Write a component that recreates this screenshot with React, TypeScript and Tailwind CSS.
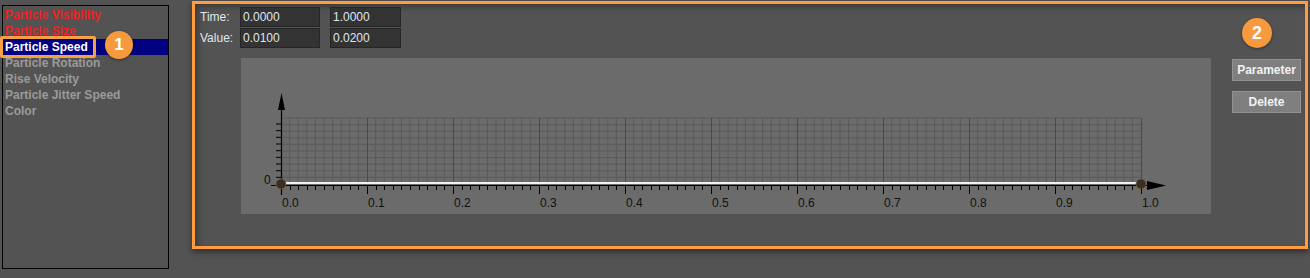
import React from 'react';

const items = [
  { label: 'Particle Visibility', tone: 'red' },
  { label: 'Particle Size', tone: 'red' },
  { label: 'Particle Speed', tone: 'selected' },
  { label: 'Particle Rotation', tone: 'gray' },
  { label: 'Rise Velocity', tone: 'gray' },
  { label: 'Particle Jitter Speed', tone: 'gray' },
  { label: 'Color', tone: 'gray' },
];

const X0 = 281;
const X1 = 1141;
const STEP = (X1 - X0) / 100;

function CurveChart() {
  const minor = Array.from({ length: 101 }, (_, i) => X0 + i * STEP);
  const rows = Array.from({ length: 10 }, (_, i) => 118 + i * 6.6);
  const yTicks = Array.from({ length: 9 }, (_, i) => 124 + i * 6.67);
  const labels = Array.from({ length: 11 }, (_, i) => i);

  return (
    <svg width={970} height={156} viewBox="241 58 970 156" className="block">
      {/* grid */}
      {minor.map((x, i) =>
        i % 10 === 0 ? null : (
          <line key={'v' + i} x1={x} y1={118} x2={x} y2={184} stroke="#5b5b5b" strokeWidth={1} />
        )
      )}
      {rows.map((y, i) => (
        <line key={'h' + i} x1={X0} y1={y} x2={X1} y2={y} stroke="#5b5b5b" strokeWidth={1} />
      ))}
      {labels.map((i) => (
        <line key={'m' + i} x1={X0 + i * 86 + 0.5} y1={118} x2={X0 + i * 86 + 0.5} y2={184} stroke="#4a4a4a" strokeWidth={1} />
      ))}

      {/* y axis */}
      <line x1={281.5} y1={106} x2={281.5} y2={195} stroke="#000" strokeWidth={1.2} />
      <polygon points="278,110 281.5,93 285,110" fill="#000" />
      {yTicks.map((y, i) => (
        <line key={'yt' + i} x1={276} y1={y} x2={281} y2={y} stroke="#000" strokeWidth={1} />
      ))}
      <text x={264} y={184} fontSize={12} fontFamily="'Liberation Sans', Arial, sans-serif" fill="#111">0</text>

      {/* x axis */}
      <rect x={X0} y={182} width={X1 - X0} height={2} fill="#f2f2f2" />
      <line x1={271} y1={185.5} x2={1150} y2={185.5} stroke="#000" strokeWidth={1} />
      <polygon points="1147,181 1166,185.5 1147,190" fill="#000" />
      {minor.map((x, i) => (
        <line
          key={'xt' + i}
          x1={Math.round(x) + 0.5}
          y1={185}
          x2={Math.round(x) + 0.5}
          y2={i % 10 === 0 ? 194 : 190}
          stroke="#000"
          strokeWidth={1}
        />
      ))}
      {labels.map((i) => (
        <text
          key={'l' + i}
          x={X0 + i * 86 + 1}
          y={207}
          fontSize={12}
          fontFamily="'Liberation Sans', Arial, sans-serif"
          fill="#111"
        >
          {(i / 10).toFixed(1)}
        </text>
      ))}

      {/* keys */}
      <circle cx={281} cy={184} r={5} fill="#3a2f26" stroke="#8a6a40" strokeWidth={1} strokeDasharray="1.5 1" />
      <circle cx={1141} cy={184} r={5} fill="#3a2f26" stroke="#8a6a40" strokeWidth={1} strokeDasharray="1.5 1" />
    </svg>
  );
}

function Field({ value }: { value: string }) {
  return (
    <div className="w-full h-[20px] bg-[#333333] border border-[#262626] flex items-center pl-[2px] text-[12px] text-[#dfe6ee]">
      {value}
    </div>
  );
}

export default function App() {
  return (
    <div
      className="relative w-[1310px] h-[278px] bg-[#535353] flex items-start overflow-hidden"
      style={{ fontFamily: "'Liberation Sans', Arial, sans-serif" }}
    >
      {/* Property list */}
      <div className="ml-[2px] mt-[5px] w-[167px] h-[264px] border border-black pt-[1px]">
        {items.map((item) => (
          <div
            key={item.label}
            className={
              'h-[16px] flex items-center pl-[2px] text-[12px] font-bold leading-none ' +
              (item.tone === 'selected'
                ? 'bg-[#000080] text-white'
                : item.tone === 'red'
                ? 'text-[#ee2222]'
                : 'text-[#9a9a9a]')
            }
          >
            {item.label}
          </div>
        ))}
      </div>

      {/* Curve editor */}
      <div className="ml-[23px] mt-[1px] w-[1116px] h-[248px] border-[3px] border-[#ff9c40] shadow-[0_3px_6px_rgba(0,0,0,0.45),inset_3px_3px_6px_rgba(0,0,0,0.3)] flex">
        <div className="pl-[5px] pt-[3px]">
          <div className="grid grid-cols-[40px_80px_81px] gap-y-[1px] items-center text-[12px] text-[#dfe6ee]">
            <span>Time:</span>
            <Field value="0.0000" />
            <div className="pl-[10px]"><Field value="1.0000" /></div>
            <span>Value:</span>
            <Field value="0.0100" />
            <div className="pl-[10px]"><Field value="0.0200" /></div>
          </div>
          <div className="ml-[41px] mt-[10px] w-[970px] h-[156px] bg-[#6b6b6b]">
            <CurveChart />
          </div>
        </div>

        <div className="ml-[21px] mt-[55px] flex flex-col gap-[10px]">
          <button className="w-[69px] h-[22px] bg-[#7f7f7f] border border-[#939393] text-[12px] font-bold text-[#f2f2f2]">
            Parameter
          </button>
          <button className="w-[69px] h-[22px] bg-[#7f7f7f] border border-[#939393] text-[12px] font-bold text-[#f2f2f2]">
            Delete
          </button>
        </div>
      </div>

      {/* annotations */}
      <div className="absolute left-0 top-[36px] w-[96px] h-[22px] border-[3px] border-[#f7a046] rounded-[2px]" />
      <div className="absolute left-[105px] top-[31px] w-[28px] h-[28px] rounded-full bg-[#f79a3e] shadow-[0_1px_3px_rgba(0,0,0,0.4)] flex items-center justify-center text-white font-bold text-[17px]">
        1
      </div>
      <div className="absolute left-[1242px] top-[18px] w-[30px] h-[30px] rounded-full bg-[#f79a3e] shadow-[0_1px_3px_rgba(0,0,0,0.4)] flex items-center justify-center text-white font-bold text-[18px]">
        2
      </div>
    </div>
  );
}
